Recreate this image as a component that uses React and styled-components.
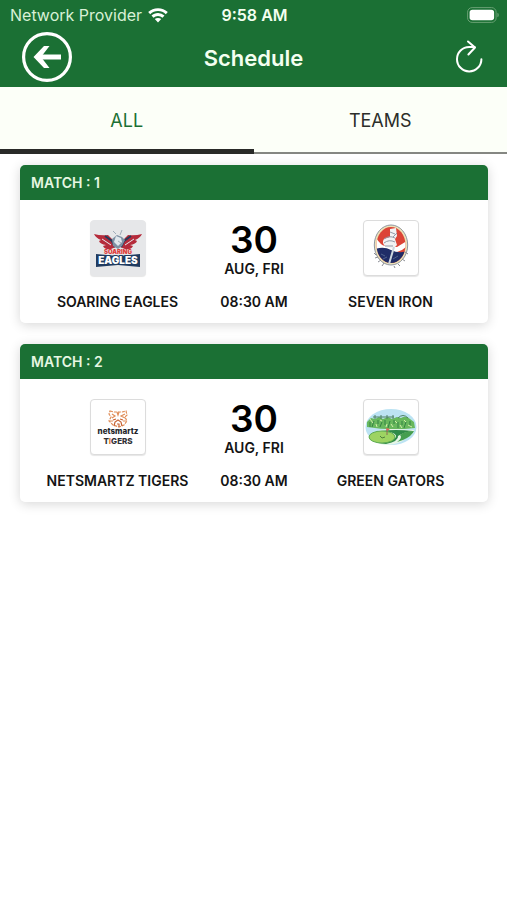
import React from "react";
import styled, { createGlobalStyle } from "styled-components";

const GREEN = "#1b7034";

const GlobalStyle = createGlobalStyle`
  *, *::before, *::after { box-sizing: border-box; }
  body {
    margin: 0;
    background: #ffffff;
    color: #141414;
    font-family: Inter, "Liberation Sans", sans-serif;
  }
  button { font: inherit; border: 0; padding: 0; background: none; cursor: pointer; }
  svg { display: block; }
`;

const Header = styled.header`
  background: ${GREEN};
  color: #f4fff0;
`;

const StatusBar = styled.div`
  display: grid;
  grid-template-columns: 1fr auto 1fr;
  align-items: center;
  height: 30px;
  padding: 0 8px 0 10px;
  font-size: 16px;
  line-height: 20px;
`;

const Carrier = styled.div`
  display: flex;
  align-items: center;
  gap: 6px;
  color: #d8f0d6;
  white-space: nowrap;
`;

const Clock = styled.time`
  font-weight: 600;
  white-space: nowrap;
`;

const Battery = styled.div`
  justify-self: end;
`;

const NavBar = styled.div`
  display: grid;
  grid-template-columns: 50px 1fr 50px;
  align-items: center;
  height: 57px;
  padding: 0 13px 4px 22px;
`;

const IconButton = styled.button`
  display: grid;
  place-items: center;
  width: 50px;
  height: 50px;
  color: #ffffff;
`;

const Title = styled.h1`
  margin: 0;
  padding-right: 9px;
  padding-top: 2px;
  text-align: center;
  font-size: 22px;
  line-height: 28px;
  font-weight: 600;
`;

const Tabs = styled.div`
  display: grid;
  grid-template-columns: 1fr 1fr;
  background: #fcfff8;
`;

const Tab = styled.button`
  display: flex;
  flex-direction: column;
  justify-content: flex-end;
  height: 67px;
  font-size: 18px;
  line-height: 24px;
  text-align: center;
  color: ${({ $active }) => ($active ? GREEN : "#2c2e2a")};

  &::after {
    content: "";
    width: 100%;
    height: ${({ $active }) => ($active ? "5px" : "2px")};
    margin-top: ${({ $active }) => ($active ? "16px" : "19px")};
    background: ${({ $active }) => ($active ? "#292a28" : "#858782")};
  }
`;

const TabLabel = styled.span`
  width: 100%;
`;

const MatchList = styled.main`
  display: flex;
  flex-direction: column;
  gap: 21px;
  padding: 11px 19px 24px 20px;
`;

const Card = styled.article`
  border-radius: 5px;
  overflow: hidden;
  background: #ffffff;
  box-shadow: 0 2px 12px rgba(0, 0, 0, 0.16);
`;

const CardHeader = styled.h2`
  margin: 0;
  padding: 9px 11px 8px;
  background: ${GREEN};
  color: #e6f7e2;
  font-size: 14px;
  line-height: 18px;
  font-weight: 600;
`;

const CardBody = styled.div`
  display: grid;
  grid-template-columns: 5fr 2fr 5fr;
  padding: 20px 0 12px;
`;

const Column = styled.div`
  display: flex;
  flex-direction: column;
  align-items: center;
  justify-content: space-between;
  height: 91px;
`;

const Label = styled.span`
  font-size: 14px;
  line-height: 18px;
  font-weight: 600;
  white-space: nowrap;
`;

const DateBlock = styled.div`
  display: flex;
  flex-direction: column;
  align-items: center;
`;

const Day = styled.span`
  font-size: 37px;
  line-height: 40px;
  font-weight: 600;
  color: #000000;
`;

const LogoFrame = styled.div`
  width: 56px;
  height: 56px;
  border: 1px solid ${({ $tone }) => $tone || "#dcdcdc"};
  border-radius: 4px;
  overflow: hidden;
  background: ${({ $tone }) => $tone || "#ffffff"};
  box-shadow: 0 1px 1px rgba(0, 0, 0, 0.1);
`;

const WifiIcon = () => (
  <svg width="20" height="15" viewBox="0 0 20 15" fill="#fff" aria-hidden="true">
    <path d="M10 .2C6.200.2 2.700 1.700.2 4.100L2.200 6.200A11.300 11.300 0 0 1 17.800 6.200L19.800 4.100A14.100 14.100 0 0 0 10 .2Z" />
    <path d="M10 5.100C7.500 5.100 5.200 6.100 3.500 7.600L5.500 9.700A6.500 6.500 0 0 1 14.500 9.700L16.500 7.600A9.500 9.500 0 0 0 10 5.100Z" />
    <path d="M10 9.900A4.700 4.700 0 0 0 6.800 11.100L10 14.500L13.200 11.100A4.700 4.700 0 0 0 10 9.900Z" />
  </svg>
);

const BatteryIcon = () => (
  <svg width="33" height="16" viewBox="0 0 33 16" role="img" aria-label="Battery full">
    <rect x="1.600" y=".6" width="28.500" height="14.800" rx="4.500" fill="none" stroke="#68a073" />
    <rect x="3.600" y="2.700" width="24.500" height="10.600" rx="2.800" fill="#fff" />
    <path d="M31.400 5.700Q32.800 6.300 32.800 8T31.400 10.300Z" fill="#68a073" />
  </svg>
);

const BackIcon = () => (
  <svg width="50" height="50" viewBox="0 0 50 50" fill="none" stroke="currentColor" aria-hidden="true">
    <circle cx="25" cy="25" r="23.400" strokeWidth="3.200" />
    <path d="M39 25H16" strokeWidth="5" />
    <path d="M27.500 14H22L11.500 25L22 36H27.500L19 25Z" fill="currentColor" stroke="none" />
  </svg>
);

const RefreshIcon = () => (
  <svg width="28" height="34" viewBox="0 0 28 34" fill="none" stroke="currentColor" strokeWidth="2" strokeLinecap="round" strokeLinejoin="round" aria-hidden="true">
    <path d="M26.400 19.200A12.200 12.200 0 1 1 14.200 7H19.500" />
    <path d="M13 1.500L20 7.500L13.400 14.500" />
  </svg>
);

const EaglesLogo = () => (
  <svg width="54" height="54" viewBox="0 0 54 54" role="img" aria-label="Soaring Eagles logo">
    <path d="M3 13Q10 15 17 14L23 20L25 26L20 28Q14 29 12 25L15 24Q9 23 8 20L10 19Q5 17 3 13Z" fill="#b52b3b" />
    <path d="M51 13Q44 15 37 14L31 20L29 26L34 28Q40 29 42 25L39 24Q45 23 46 20L44 19Q49 17 51 13Z" fill="#b52b3b" />
    <path d="M14 15L21 20L24 26M40 15L33 20L30 26" fill="none" stroke="#263c5c" strokeWidth="2" />
    <path d="M11 18L20 24M43 18L34 24" stroke="#e8e9ee" strokeWidth="1" />
    <path d="M21 18L26 14L31 16L34 19L31 25L27 28L22 25Z" fill="#7e91a4" />
    <path d="M25 15L30 17L31 21L27 25L23 21Z" fill="#e0e7ed" />
    <path d="M22 10L25 13M31 9L29 14M27 20L30 22" stroke="#a0adb9" strokeWidth="1" />
    <text x="27" y="33" textAnchor="middle" fontFamily="Inter, sans-serif" fontSize="6" fontWeight="900" fill="#df3d3b">SOARING</text>
    <path d="M5 33L27 35L49 33V46L27 44L5 46Z" fill="#203b60" />
    <text x="27" y="43" textAnchor="middle" fontFamily="Inter, sans-serif" fontSize="10" fontWeight="900" fill="#fff" stroke="#203b60" strokeWidth="2" paintOrder="stroke">EAGLES</text>
  </svg>
);

const SevenIronLogo = () => (
  <svg width="54" height="54" viewBox="0 0 54 54" role="img" aria-label="Seven Iron logo">
    <defs>
      <clipPath id="seven-oval"><ellipse cx="27" cy="24" rx="14.500" ry="18" /></clipPath>
    </defs>
    <ellipse cx="27" cy="24" rx="16.700" ry="20" fill="#eee0b5" stroke="#8f97a3" />
    <g clipPath="url(#seven-oval)">
      <rect x="12" y="5" width="30" height="39" fill="#dc4436" />
      <path d="M11 15Q16 24 21 25L33 26L43 20V25Q38 30 33 31L12 32Z" fill="#fff" />
      <path d="M11 28Q20 25 27 29Q35 33 43 30V45H11Z" fill="#202d67" />
    </g>
    <path d="M26 8L32 7L33 15L31 18L33 24L29 28L22 26Q17 22 20 18L26 16Z" fill="#f2f2f3" />
    <path d="M26 11L31 13M20 18Q25 14 31 17M20 22Q25 18 31 21M21 25H29M29 16L33 12" fill="none" stroke="#9299a7" />
    <path d="M30 26L25 43" stroke="#cdd6df" strokeWidth="2" />
    <path d="M17 33L21 35M19 38L23 36M29 38L34 35" stroke="#52648f" strokeWidth="1" />
    <path d="M10 32L12 34M11 37L14 36M14 41L17 39M18 45L20 42M30 45L31 47M34 43L36 45M38 38L41 40M41 31L44 33" stroke="#8a8d95" strokeWidth="1" />
  </svg>
);

const TigersLogo = () => (
  <svg width="54" height="54" viewBox="0 0 54 54" role="img" aria-label="Netsmartz Tigers logo">
    <g fill="none" stroke="#e08d58" strokeWidth="1.200">
      <path d="M19 11L23 12H31L35 11L36 15L34 17L36 21L33 25L28 27L22 25L18 21L20 17L18 14Z" strokeDasharray="3 1" />
      <path d="M21 14L24 16L21 18M34 14L30 16L34 18M19 21H22M35 21H32M26 12L27 15L28 12" />
      <path d="M22 20L25 19M32 20L29 19M23 26L24 22L27 20L30 22L31 26M26 24H28V27" stroke="#c76435" />
    </g>
    <text x="27" y="34" textAnchor="middle" fontFamily="Inter, sans-serif" fontSize="8" fontWeight="800" fill="#24262a">netsmartz</text>
    <text x="27" y="44" textAnchor="middle" fontFamily="Inter, sans-serif" fontSize="8" fontWeight="800" fill="#303136">T<tspan fill="#e67832">I</tspan>GERS</text>
  </svg>
);

const GatorsLogo = () => (
  <svg width="54" height="54" viewBox="0 0 54 54" role="img" aria-label="Green Gators logo">
    <ellipse cx="27" cy="27" rx="25.500" ry="18" fill="#bce3f3" />
    <path d="M3 27V22L7 18L11 19L15 17L19 19L24 17L28 19L33 17L37 18Q42 15 46 19L50 22L51 28Q27 31 3 27Z" fill="#68b85d" />
    <path d="M9 17H30M11 15V19M17 15V19M23 15V19M29 15V19M34 18Q39 13 44 18" fill="none" stroke="#4f8065" strokeWidth="1" />
    <path d="M6 22V27M10 21L8 27M14 20V24M18 22L16 27M21 20V25M26 21L24 28M30 20V24M34 22V28M38 21V25M42 22L40 28M46 21V26" fill="none" stroke="#358244" strokeWidth="1" />
    <path d="M6 19L9 23M12 24L13 27M16 20L18 21M22 27L23 24M27 24L29 27M31 21L33 23M36 25L38 28M40 20L42 22M44 25L48 27" stroke="#d4edaa" strokeWidth="1" />
    <path d="M5 35Q14 29 27 29T50 30Q50 35 43 37Q36 45 21 45Q8 43 5 35Z" fill="#e6f5e7" />
    <path d="M17 31Q31 29 49 31Q40 32 34 36Q35 41 22 44L14 43Q30 41 32 37Q33 32 17 31Z" fill="#2f8a48" />
    <path d="M36 35Q41 31 50 31Q48 36 39 40L33 42Q39 38 36 35Z" fill="#459e50" />
    <ellipse cx="18" cy="37" rx="13" ry="6" fill="#9dd362" stroke="#5dab50" />
    <path d="M23 35V29" stroke="#8a6b55" strokeWidth="1" />
    <path d="M22 28L26 29L23 31Z" fill="#df6257" />
    <path d="M16 36L18 38L21 37" fill="none" stroke="#52803f" strokeWidth="1" />
  </svg>
);

const matches = [
  {
    number: 1,
    day: "30",
    date: "AUG, FRI",
    time: "08:30 AM",
    home: { name: "SOARING EAGLES", Logo: EaglesLogo, tone: "#e6e7e9" },
    away: { name: "SEVEN IRON", Logo: SevenIronLogo },
  },
  {
    number: 2,
    day: "30",
    date: "AUG, FRI",
    time: "08:30 AM",
    home: { name: "NETSMARTZ TIGERS", Logo: TigersLogo },
    away: { name: "GREEN GATORS", Logo: GatorsLogo },
  },
];

const Team = ({ name, Logo, tone }) => (
  <Column>
    <LogoFrame $tone={tone}><Logo /></LogoFrame>
    <Label>{name}</Label>
  </Column>
);

const MatchCard = ({ match }) => (
  <Card>
    <CardHeader>MATCH : {match.number}</CardHeader>
    <CardBody>
      <Team {...match.home} />
      <Column>
        <DateBlock>
          <Day>{match.day}</Day>
          <Label>{match.date}</Label>
        </DateBlock>
        <Label>{match.time}</Label>
      </Column>
      <Team {...match.away} />
    </CardBody>
  </Card>
);

export default function App() {
  const [active, setActive] = React.useState("ALL");
  return (
    <>
      <GlobalStyle />
      <Header>
        <StatusBar>
          <Carrier>Network Provider <WifiIcon /></Carrier>
          <Clock>9:58 AM</Clock>
          <Battery><BatteryIcon /></Battery>
        </StatusBar>
        <NavBar>
          <IconButton type="button" aria-label="Back"><BackIcon /></IconButton>
          <Title>Schedule</Title>
          <IconButton type="button" aria-label="Refresh"><RefreshIcon /></IconButton>
        </NavBar>
      </Header>
      <Tabs role="tablist">
        {["ALL", "TEAMS"].map((name) => (
          <Tab
            key={name}
            type="button"
            role="tab"
            aria-selected={active === name}
            $active={active === name}
            onClick={() => setActive(name)}
          >
            <TabLabel>{name}</TabLabel>
          </Tab>
        ))}
      </Tabs>
      <MatchList>
        {matches.map((match) => <MatchCard key={match.number} match={match} />)}
      </MatchList>
    </>
  );
}
